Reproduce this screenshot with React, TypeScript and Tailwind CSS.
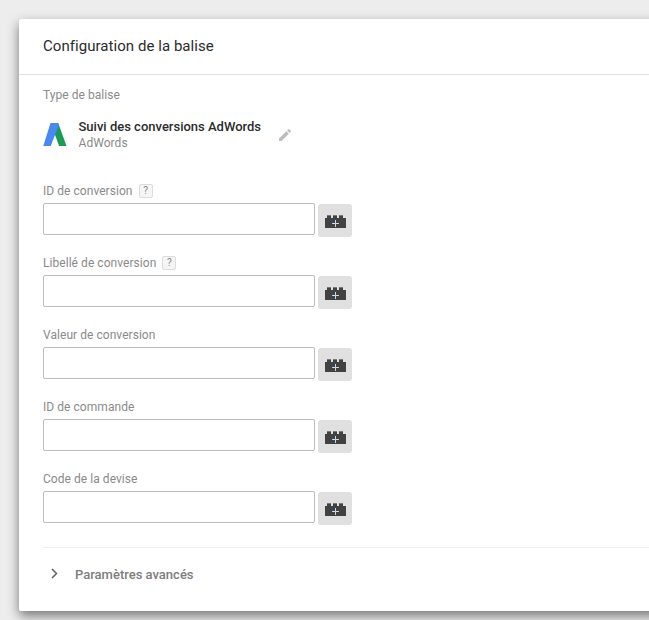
type FieldProps = { label: string; help?: boolean };

function BrickIcon() {
  return (
    <svg width="22" height="15" viewBox="0 0 22 15" className="ml-[2px] mt-[2px]">
      <path d="M2 1h4v3H2zM8 1h4v3H8zM14 1h4v3h-4z" fill="#777777" />
      <path d="M0 4h2V2h4v2h2V2h4v2h2V2h4v2h3v10H0z" fill="#424242" />
      <path d="M10 6h1v3h3v1h-3v3h-1v-3H7V9h3z" fill="#c5dcf0" />
    </svg>
  );
}

function Field({ label, help }: FieldProps) {
  return (
    <div className="h-[72px]">
      <div className="flex h-[19px] items-start">
        <label className="text-[12px] leading-[16px] tracking-[0.05px] text-[#8a8a8a]">{label}</label>
        {help && (
          <span className="ml-[6px] mt-px flex h-[14px] w-[14px] items-center justify-center rounded-[2px] border border-[#dcdcdc] bg-[#f5f5f5] text-[10px] leading-none text-[#888]">
            ?
          </span>
        )}
      </div>
      <div className="flex gap-[3px]">
        <input className="mt-px h-[32px] w-[272px] rounded-[2px] border border-[#bdbdbd] bg-white outline-none" />
        <button className="mt-[2px] flex h-[33px] w-[34px] items-center justify-center rounded-[3px] bg-[#e0e0e0]">
          <BrickIcon />
        </button>
      </div>
    </div>
  );
}

const fields: FieldProps[] = [
  { label: "ID de conversion", help: true },
  { label: "Libellé de conversion", help: true },
  { label: "Valeur de conversion" },
  { label: "ID de commande" },
  { label: "Code de la devise" },
];

export default function App() {
  return (
    <div className="h-[620px] w-full overflow-hidden bg-[#ededed] pl-[19px] pt-[19px] font-['Roboto',sans-serif]">
      <main className="h-[592px] w-[680px] rounded-[2px] bg-white shadow-[0_5px_12px_rgba(0,0,0,0.5)]">
        <header className="flex h-[56px] items-center border-b border-[#e0e0e0] pb-[2px] pl-[24px]">
          <h1 className="text-[15px] leading-[20px] tracking-[0.05px] text-[#2b2b2b]">Configuration de la balise</h1>
        </header>
        <div className="pl-[24px] pt-[12px]">
          <p className="text-[12px] leading-[16px] tracking-[0.05px] text-[#8a8a8a]">Type de balise</p>
          <div className="mt-[16px] flex h-[32px]">
            <svg width="24" height="24" viewBox="0 0 24 24" className="mt-[4px]">
              <path d="M12 0h3.2l8.3 23h-7.4L11 9z" fill="#1c9957" />
              <path d="M7.5 0H15l.8 2.2L7.7 23H.3z" fill="#4788f4" />
            </svg>
            <div className="ml-[11.5px]">
              <div className="text-[13px] font-medium leading-[16px] text-[#2b2b2b]">Suivi des conversions AdWords</div>
              <div className="text-[12px] leading-[16px] tracking-[0.05px] text-[#8a8a8a]">AdWords</div>
            </div>
            <svg width="16" height="16" viewBox="0 0 24 24" className="ml-[15.5px] mt-[8px]" fill="#bdbdbd">
              <path d="M3 17.25V21h3.75L17.81 9.94l-3.75-3.75L3 17.25zM20.71 7.04a1 1 0 0 0 0-1.41l-2.34-2.34a1 1 0 0 0-1.41 0l-1.83 1.83 3.75 3.75 1.83-1.83z" />
            </svg>
          </div>
          <div className="mt-[32px]">
            {fields.map((f) => (
              <Field key={f.label} {...f} />
            ))}
          </div>
          <div className="mt-[4px] flex items-center border-t border-[#eeeeee] pt-[18px]">
            <svg width="24" height="16" viewBox="0 0 24 16" fill="none" stroke="#616161" strokeWidth="1.5">
              <path d="M9 2l4.5 4.5L9 11" />
            </svg>
            <span className="ml-[8px] text-[13px] font-medium leading-[18px] text-[#7d7d7d]">Paramètres avancés</span>
          </div>
        </div>
      </main>
    </div>
  );
}
